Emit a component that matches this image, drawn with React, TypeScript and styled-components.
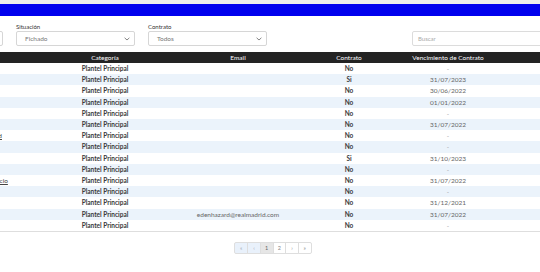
import React from "react";
import styled, { createGlobalStyle } from "styled-components";

const Global = createGlobalStyle`
  html, body { margin: 0; padding: 0; background: #ffffff; overflow: hidden; }
  body { font-family: Lato, "Open Sans", sans-serif; color: #333; }
`;

const Page = styled.div`
  width: 786px;
  margin-left: -120px;
`;

const TopStrip = styled.div`
  height: 4px;
  background: #ececec;
`;

const BlueBar = styled.div`
  height: 12px;
  background: #0000ee;
`;

const FilterRow = styled.div`
  display: flex;
  align-items: flex-end;
  gap: 13px;
  padding: 7px 4px 0;
`;

const Field = styled.div<{ $w: number }>`
  display: flex;
  flex-direction: column;
  width: ${(p) => p.$w}px;
`;

const Spacer = styled.div`
  flex: 1;
`;

const Label = styled.div`
  font-size: 6px;
  line-height: 7px;
  height: 7px;
  margin-bottom: 1px;
  color: #333;
`;

const SelectBox = styled.div`
  box-sizing: border-box;
  height: 15px;
  border: 1px solid #d6d6d6;
  border-radius: 2px;
  display: flex;
  align-items: center;
  justify-content: space-between;
  padding: 0 4px 0 8px;
  font-size: 6.5px;
  color: #777;
  background: #fff;
`;

const SearchBox = styled.div`
  box-sizing: border-box;
  height: 15px;
  border: 1px solid #dcdcdc;
  border-radius: 2px;
  display: flex;
  align-items: center;
  padding: 0 5px;
  font-size: 6px;
  color: #aaa;
`;

const Table = styled.table`
  margin: 6px 4px 0;
  width: 778px;
  border-collapse: collapse;
  table-layout: fixed;
  border-bottom: 1px solid #dedede;
`;

const Th = styled.th<{ $left?: boolean }>`
  height: 11px;
  padding: 0 4px;
  background: #232323;
  color: #ffffff;
  font-size: 6.5px;
  font-weight: 400;
  text-align: ${(p) => (p.$left ? "left" : "center")};
  line-height: 11px;
  white-space: nowrap;
  overflow: hidden;
`;

const Tr = styled.tr<{ $alt: boolean }>`
  background: ${(p) => (p.$alt ? "#ebf3fb" : "#ffffff")};
`;

const Td = styled.td<{ $kind?: "bold" | "muted" | "date" | "left" }>`
  height: 11.2px;
  padding: 0 4px;
  line-height: 11.2px;
  font-size: 6.5px;
  text-align: ${(p) => (p.$kind === "left" ? "left" : "center")};
  white-space: nowrap;
  overflow: hidden;
  font-weight: ${(p) => (p.$kind === "bold" ? 700 : 400)};
  color: ${(p) =>
    p.$kind === "bold" ? "#3a3a3a" : p.$kind === "muted" ? "#999" : "#666"};
`;

const NameLink = styled.a<{ $fresh: boolean }>`
  color: ${(p) => (p.$fresh ? "#4a8fd6" : "#444")};
  text-decoration: underline;
`;

const Pager = styled.div`
  display: flex;
  justify-content: center;
  margin-top: 10px;
`;

const PageBtn = styled.div<{ $state: "disabled" | "active" | "normal" }>`
  box-sizing: border-box;
  width: 13.7px;
  height: 12px;
  display: flex;
  align-items: center;
  justify-content: center;
  font-size: 5.5px;
  border: 1px solid #dedede;
  margin-left: -1px;
  background: ${(p) =>
    p.$state === "disabled" ? "#e9f1fb" : p.$state === "active" ? "#e6e6e6" : "#fff"};
  color: ${(p) =>
    p.$state === "disabled" ? "#9aa6b4" : p.$state === "active" ? "#666" : "#888"};
  &:first-child { border-radius: 2px 0 0 2px; margin-left: 0; }
  &:last-child { border-radius: 0 2px 2px 0; }
`;

const Chevron = () => (
  <svg width="6" height="4" viewBox="0 0 6 4">
    <path d="M0.6 0.8 L3 3 L5.4 0.8" fill="none" stroke="#666" strokeWidth="0.8" />
  </svg>
);

type Row = { name: string; email: string; contrato: string; venc: string; fresh?: boolean };

const rows: Row[] = [
  { name: "Courtoisi", email: "", contrato: "No", venc: "-", fresh: true },
  { name: "Carvajali", email: "", contrato: "Si", venc: "31/07/2023", fresh: true },
  { name: "Nacho", email: "", contrato: "No", venc: "30/06/2022" },
  { name: "Alaba", email: "", contrato: "No", venc: "01/01/2022" },
  { name: "Isco", email: "", contrato: "No", venc: "-" },
  { name: "Vázquez", email: "", contrato: "No", venc: "31/07/2022" },
  { name: "Ødegaard", email: "", contrato: "No", venc: "-" },
  { name: "Rodrygo", email: "", contrato: "No", venc: "-" },
  { name: "Mendy", email: "", contrato: "Si", venc: "31/10/2023" },
  { name: "Kroos", email: "", contrato: "No", venc: "-" },
  { name: "B. Florencio", email: "", contrato: "No", venc: "31/07/2022" },
  { name: "Bale", email: "", contrato: "No", venc: "-" },
  { name: "Modrić", email: "", contrato: "No", venc: "31/12/2021" },
  { name: "Hazard", email: "edenhazard@realmadrid.com", contrato: "No", venc: "31/07/2022" },
  { name: "Jović", email: "", contrato: "No", venc: "-" },
];

export default function App() {
  return (
    <Page>
      <Global />
      <TopStrip />
      <BlueBar />
      <FilterRow>
        <Field $w={119}>
          <Label>Temporada</Label>
          <SelectBox>
            <span>2021/2022</span>
            <Chevron />
          </SelectBox>
        </Field>
        <Field $w={119}>
          <Label>Situación</Label>
          <SelectBox>
            <span>Fichado</span>
            <Chevron />
          </SelectBox>
        </Field>
        <Field $w={119}>
          <Label>Contrato</Label>
          <SelectBox>
            <span>Todos</span>
            <Chevron />
          </SelectBox>
        </Field>
        <Spacer />
        <Field $w={250}>
          <SearchBox>Buscar</SearchBox>
        </Field>
      </FilterRow>
      <Table>
        <colgroup>
          <col style={{ width: 86 }} />
          <col style={{ width: 70 }} />
          <col style={{ width: 130 }} />
          <col style={{ width: 136 }} />
          <col style={{ width: 86 }} />
          <col style={{ width: 112 }} />
          <col style={{ width: 158 }} />
        </colgroup>
        <thead>
          <tr>
            <Th>Foto</Th>
            <Th $left>Jug.</Th>
            <Th>Categoría</Th>
            <Th>Email</Th>
            <Th>Contrato</Th>
            <Th>Vencimiento de Contrato</Th>
            <Th></Th>
          </tr>
        </thead>
        <tbody>
          {rows.map((r, i) => (
            <Tr key={i} $alt={i % 2 === 1}>
              <Td />
              <Td $kind="left">
                <NameLink $fresh={!!r.fresh}>{r.name}</NameLink>
              </Td>
              <Td $kind="bold">Plantel Principal</Td>
              <Td>{r.email}</Td>
              <Td $kind="bold">{r.contrato}</Td>
              <Td $kind={r.venc === "-" ? "muted" : "date"}>{r.venc}</Td>
              <Td />
            </Tr>
          ))}
        </tbody>
      </Table>
      <Pager>
        <PageBtn $state="disabled">«</PageBtn>
        <PageBtn $state="disabled">‹</PageBtn>
        <PageBtn $state="active">1</PageBtn>
        <PageBtn $state="normal">2</PageBtn>
        <PageBtn $state="normal">›</PageBtn>
        <PageBtn $state="normal">»</PageBtn>
      </Pager>
    </Page>
  );
}
